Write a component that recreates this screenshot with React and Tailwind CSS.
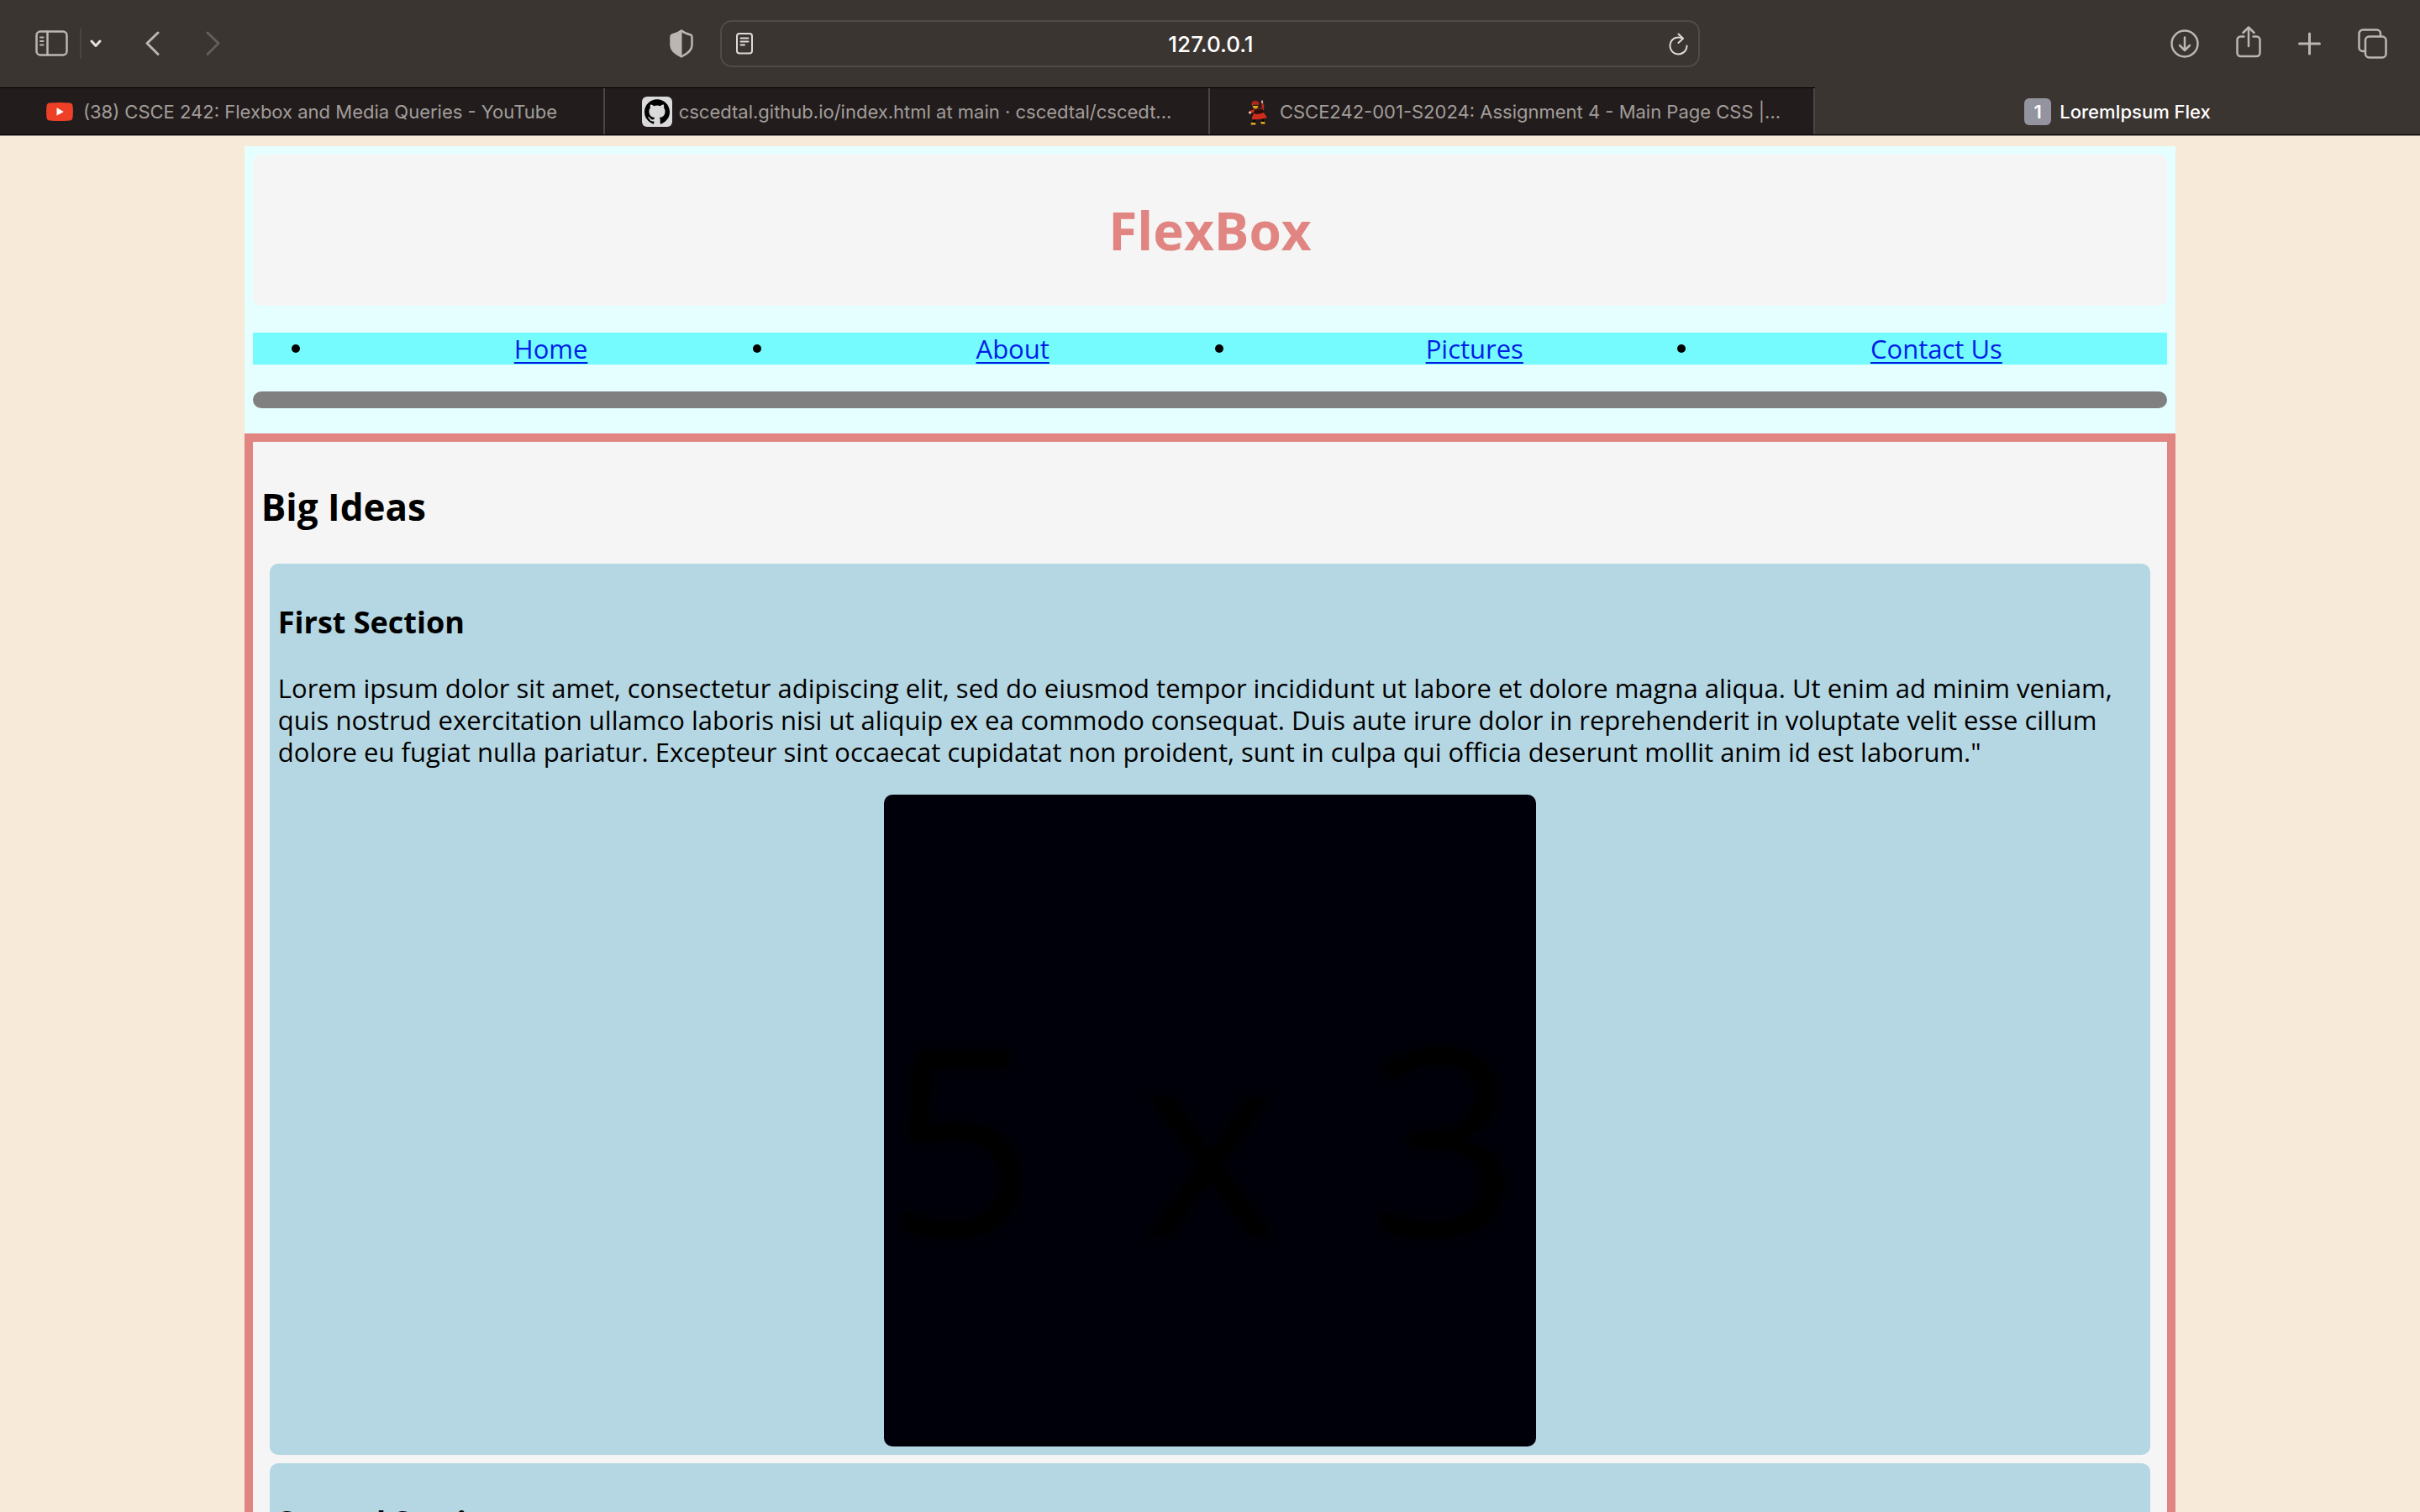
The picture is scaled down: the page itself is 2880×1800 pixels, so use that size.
import { SiGithub } from "react-icons/si";

const LINKS = ["Home", "About", "Pictures", "Contact Us"];

const LOREM =
  'Lorem ipsum dolor sit amet, consectetur adipiscing elit, sed do eiusmod tempor incididunt ut labore et dolore magna aliqua. Ut enim ad minim veniam, quis nostrud exercitation ullamco laboris nisi ut aliquip ex ea commodo consequat. Duis aute irure dolor in reprehenderit in voluptate velit esse cillum dolore eu fugiat nulla pariatur. Excepteur sint occaecat cupidatat non proident, sunt in culpa qui officia deserunt mollit anim id est laborum."';

function Icon({ w, h, width = 2.5, children }) {
  return (
    <svg
      width={w}
      height={h}
      viewBox={`0 0 ${w} ${h}`}
      fill="none"
      stroke="currentColor"
      strokeWidth={width}
      strokeLinecap="round"
      strokeLinejoin="round"
      className="block shrink-0"
      aria-hidden="true"
    >
      {children}
    </svg>
  );
}

function Toolbar() {
  return (
    <div className="grid h-26 grid-cols-[1fr_40.5%_1fr] items-center text-[#bcb6b2]">
      <div className="flex items-center pr-8 pl-[42px]">
        <button aria-label="Sidebar" className="mr-3.5">
          <Icon w={39} h={32}>
            <rect x="1.5" y="1.5" width="36" height="28" rx="4.5" />
            <path d="M14.5 1.5v28" />
            <path d="M6 8.5h3.5M6 13h3.5M6 17.5h3.5" strokeWidth="2" />
          </Icon>
        </button>
        <span className="mr-2.5 h-9 w-0.5 bg-[#4b4542]" />
        <button aria-label="Tab groups" className="mr-[52px] text-[#e6e1de]">
          <Icon w={14} h={10} width={3}>
            <path d="M2 2l5 5.500l5-5.500" />
          </Icon>
        </button>
        <button aria-label="Back" className="mr-[55px]">
          <Icon w={17} h={30} width={3}>
            <path d="M15 2L2 14.500L15 27.500" />
          </Icon>
        </button>
        <button aria-label="Forward" className="text-[#645e5b]">
          <Icon w={17} h={30} width={3}>
            <path d="M2 2l13 12.500L2 27.500" />
          </Icon>
        </button>
        <button aria-label="Privacy report" className="ml-auto">
          <Icon w={28} h={34}>
            <path d="M14 1.500C17 4 22 5.800 25 6.500Q26.500 7 26.500 9v10C26.500 25 20 29.500 14 32.500C8 29.500 1.500 25 1.500 19V9Q1.500 7 3 6.500C6 5.800 11 4 14 1.500Z" />
            <path
              d="M14 1.500v31C8 29.500 1.500 25 1.500 19V9Q1.500 7 3 6.500C6 5.800 11 4 14 1.500Z"
              fill="currentColor"
              strokeWidth="1"
            />
          </Icon>
        </button>
      </div>

      <div className="flex h-14 items-center rounded-[14px] border-2 border-[#504b48] pr-3 pl-[17px] text-[#dedad7]">
        <button aria-label="Reader view">
          <Icon w={20} h={26} width={2}>
            <rect x="1" y="1" width="18" height="23.500" rx="3" />
            <path d="M5.500 6.500h9M5.500 10.500h9M5.500 14.500h4.500" />
          </Icon>
        </button>
        <input
          aria-label="Address"
          defaultValue="127.0.0.1"
          className="min-w-0 flex-1 bg-transparent text-center text-[26px] font-medium text-white outline-none"
        />
        <button aria-label="Reload">
          <Icon w={23} h={27} width={2}>
            <path d="M16.500 6.800A10 10 0 1 0 21.500 15.500" />
            <path d="M11.500 1.500L17 6.800L11.500 12" />
          </Icon>
        </button>
      </div>

      <div className="flex items-center justify-end gap-11 pr-[39px]">
        <button aria-label="Downloads">
          <Icon w={34} h={34}>
            <circle cx="17" cy="17" r="15.500" />
            <path d="M17 9.500v15M11 19l6 6l6-6" />
          </Icon>
        </button>
        <button aria-label="Share" className="pb-1">
          <Icon w={30} h={38}>
            <path d="M9.500 12.500H5.500a4 4 0 0 0-4 4v15.500a4 4 0 0 0 4 4h19a4 4 0 0 0 4-4V16.500a4 4 0 0 0-4-4h-4" />
            <path d="M15 24V2M8.500 8L15 1.500L21.500 8" />
          </Icon>
        </button>
        <button aria-label="New tab">
          <Icon w={27} h={28} width={3}>
            <path d="M13.500 2v24M1.500 14h24" />
          </Icon>
        </button>
        <button aria-label="Show all tabs">
          <Icon w={35} h={36}>
            <path d="M9 27H6a4.500 4.500 0 0 1-4.500-4.500V6A4.500 4.500 0 0 1 6 1.500h16.500A4.500 4.500 0 0 1 27 6v3" />
            <rect x="9" y="9.500" width="24.500" height="25" rx="4.500" />
          </Icon>
        </button>
      </div>
    </div>
  );
}

function YouTubeIcon() {
  return (
    <svg width="32" height="24" viewBox="0 0 32 24" className="mr-1 block shrink-0" aria-hidden="true">
      <path d="M4 1.500Q16 .5 28 1.500Q31 1.800 31.500 5Q32.300 12 31.500 19Q31 22.200 28 22.500Q16 23.500 4 22.500Q1 22.200.5 19Q-.3 12 .5 5Q1 1.800 4 1.500Z" fill="#ee4027" />
      <path d="M12.500 7.200v9.600L20.800 12Z" fill="#fff" />
    </svg>
  );
}

function MascotIcon() {
  return (
    <svg width="36" height="36" viewBox="0 0 36 36" className="block shrink-0" aria-hidden="true">
      <path d="M21.500 20L23 6l2.500 5l-1 8Z" fill="#c22a1c" />
      <path d="M22 5l1.500-1l.800 4h-2Z" fill="#d9b9a8" />
      <path d="M11 15l11-2l4 6l-4 6H12Z" fill="#1b0b0a" />
      <path d="M13 15l10-3l1 4l-8 3Z" fill="#5b211b" />
      <path d="M8 17l6-2l-1 4l-5 1Z" fill="#c9301f" />
      <circle cx="8.500" cy="19" r="1.600" fill="#e9c3b5" />
      <path d="M11 25l2-5l12-1l4 6q-8 3-18 2Z" fill="#cf2c1d" />
      <path d="M14 16l8-1l1 5l-8 1Z" fill="#2a100d" />
      <path d="M10.500 9q0-4 4.500-4q4.500 0 4.500 4l-1 1h-8Z" fill="#b3241a" />
      <path d="M11.500 9.500h7q0 5-3.500 5t-3.500-5Z" fill="#e5a51d" />
      <path d="M12 9.500h6.500v1.500H12Z" fill="#27100c" />
      <path d="M12 28l3-.5v4h-3ZM22 27l2.500-.5l1 3.500h-2.500Z" fill="#0d0706" />
      <path d="M10 31h5l.5 2.500H9.500ZM21.500 30h4.500l.8 2.500h-5.300Z" fill="#eda91f" />
    </svg>
  );
}

function Tab({ icon, label, active = false }) {
  return (
    <button
      className={
        active
          ? "-mt-px flex items-center justify-center gap-2.5 bg-[#3b3532] pt-0.5 text-[22px] font-medium text-white"
          : "flex min-w-0 items-center justify-center gap-2 border-r-2 border-[#4a4542] bg-[#221d1c] pt-px text-[22px] text-[#a29d9b]"
      }
    >
      {icon}
      <span className="whitespace-nowrap">{label}</span>
    </button>
  );
}

function TabBar() {
  return (
    <div className="grid h-[57px] grid-cols-4 border-y border-black bg-[#221d1c]">
      <Tab icon={<YouTubeIcon />} label="(38) CSCE 242: Flexbox and Media Queries - YouTube" />
      <Tab
        icon={
          <span className="flex size-9 shrink-0 items-center justify-center rounded-md bg-[#dadada]">
            <SiGithub className="size-[30px] text-black" />
          </span>
        }
        label="cscedtal.github.io/index.html at main · cscedtal/cscedt..."
      />
      <Tab icon={<MascotIcon />} label="CSCE242-001-S2024: Assignment 4 - Main Page CSS |..." />
      <Tab
        active
        icon={
          <span className="flex size-8 items-center justify-center rounded-md bg-[#9493a0] text-[22px] font-semibold">
            1
          </span>
        }
        label="LoremIpsum Flex"
      />
    </div>
  );
}

function FlashCard() {
  return (
    <svg
      viewBox="0 0 776 776"
      className="mx-auto block aspect-square w-[35%] rounded-[10px] bg-[#00000a]"
      role="img"
      aria-label="5 x 3"
    >
      <g
        fill="#000"
        fontFamily="Open Sans, sans-serif"
        fontWeight="400"
        fontSize="312"
        textAnchor="middle"
        className="blur-[5px]"
      >
        <text x="92" y="526">5</text>
        <text x="388" y="526">x</text>
        <text x="666" y="526">3</text>
      </g>
    </svg>
  );
}

function Section({ title }) {
  return (
    <section className="mx-2.5 mb-2.5 rounded-[10px] bg-[#b5d7e3] px-2.5 pt-[47px] pb-2.5">
      <h3 className="mb-[37px] text-[36px] leading-[45px] font-bold">{title}</h3>
      <p className="mb-8 text-[31px] leading-[38px]">{LOREM}</p>
      <FlashCard />
    </section>
  );
}

export default function App() {
  return (
    <div className="flex h-screen flex-col overflow-hidden bg-[#f8ead9] font-['Open_Sans',sans-serif] text-black">
      <div className="shrink-0 border-b border-[#9d958c] bg-[#3b3532] font-['Inter',sans-serif]">
        <Toolbar />
        <TabBar />
      </div>

      <div className="min-h-0 flex-1 overflow-hidden px-4 pt-3">
        <header className="mx-auto box-content w-4/5 bg-[#e5feff] px-2.5 pt-2.5 pb-[30px]">
          <h1 className="rounded-[10px] bg-[#f5f5f5] py-[53px] text-center text-[62px] leading-[74px] font-bold text-[#e08581]">
            FlexBox
          </h1>
          <nav className="my-8 bg-[#75fbfd] pl-20 text-[31px] leading-[38px]">
            <ul className="grid grid-cols-4">
              {LINKS.map((link) => (
                <li
                  key={link}
                  className="flex items-center before:-ml-[34px] before:size-2.5 before:shrink-0 before:rounded-full before:bg-black"
                >
                  <span className="ml-6 flex-1 text-center">
                    <a href="#" className="text-[#001ee6] underline decoration-2 underline-offset-4">
                      {link}
                    </a>
                  </span>
                </li>
              ))}
            </ul>
          </nav>
          <hr className="h-5 rounded-[10px] border-0 bg-[#808080]" />
        </header>

        <main className="mx-auto box-content w-4/5 border-10 border-[#e08581] bg-[#f5f5f5]">
          <div className="p-2.5">
            <h2 className="my-10 text-[44px] leading-[55px] font-bold">Big Ideas</h2>
            <Section title="First Section" />
            <Section title="Second Section" />
          </div>
        </main>
      </div>
    </div>
  );
}
